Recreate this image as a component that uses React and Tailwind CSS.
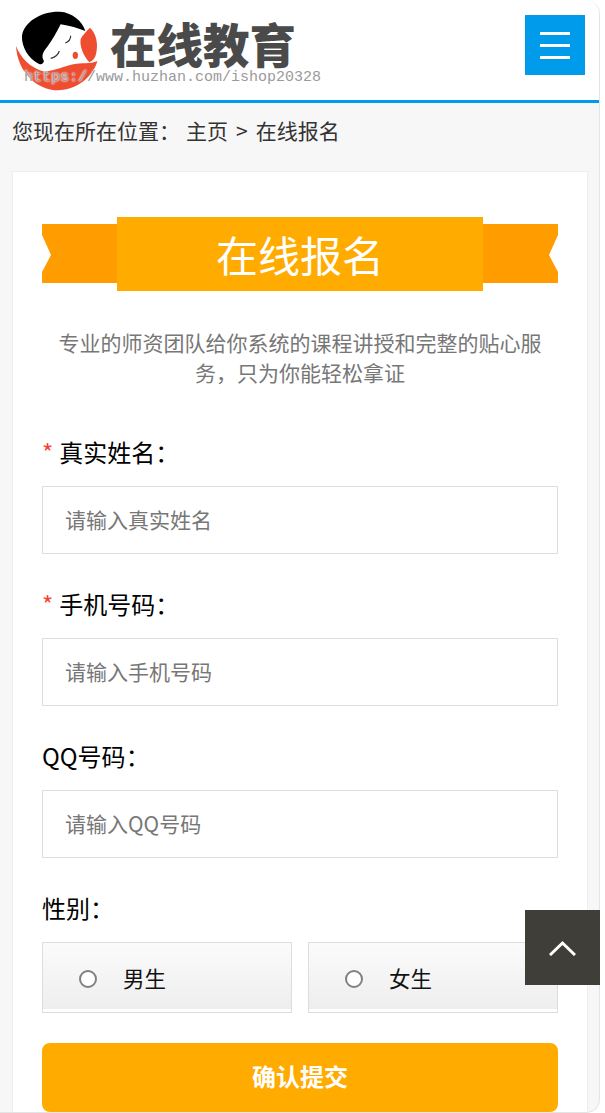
import React from "react";

const FONT = "font-['Noto_Sans_CJK_SC','Noto_Sans',sans-serif]";

const Logo = () => (
  <svg width="100" height="90" viewBox="0 0 300 270" className="shrink-0">
    {/* red bowl */}
    <path d="M18 122 C30 155 60 190 105 200 C135 196 165 184 190 178 C215 172 240 178 262 168 C250 215 200 255 145 256 C80 256 22 200 18 122 Z" fill="#ee4d30" />
    {/* cheek crescent */}
    <path d="M240 68 C258 85 266 115 258 148 C255 160 248 168 238 172 C222 155 208 125 212 102 C218 90 230 78 240 68 Z" fill="#ee4d30" />
    {/* hair */}
    <path d="M150 20 C185 22 218 48 226 78 C205 70 178 62 152 58 C140 80 128 105 112 125 C100 140 92 152 102 168 C100 176 94 180 86 176 C55 160 34 125 36 92 C42 50 95 18 150 20 Z" fill="#000" />
    {/* eyes and nose */}
    <path d="M182 92 C182 102 176 110 166 114" stroke="#333" strokeWidth="3.5" fill="none" />
    <path d="M148 138 C144 150 134 158 122 160" stroke="#333" strokeWidth="3.5" fill="none" />
    <ellipse cx="196" cy="151" rx="8" ry="11" fill="#ee4d30" />
  </svg>
);

const Label = ({ required, children }) => (
  <div className="h-[34px] text-[24px] leading-[32px] text-black">
    {required && <span className="mr-[6px] text-[#f44336]">*</span>}
    {children}：
  </div>
);

const Field = ({ required, label, placeholder }) => (
  <div className="mb-[34px]">
    <Label required={required}>{label}</Label>
    <input
      type="text"
      placeholder={placeholder}
      className="mt-[16px] block h-[68px] w-full border border-[#ddd] bg-white px-[22px] pb-[2px] text-[21px] outline-none placeholder:text-[#777]"
    />
  </div>
);

const Gender = ({ label }) => (
  <div className="flex h-[71px] w-[250px] items-start border border-[#ddd] bg-white">
    <div className="flex h-[66px] w-full items-center bg-gradient-to-b from-[#fbfbfb] to-[#eeeeee] pl-[36px] pt-[5px]">
      <span className="h-[18px] w-[18px] rounded-full border-2 border-[#808080] bg-white" />
      <span className="ml-[26px] text-[21.5px] text-[#111]">{label}</span>
    </div>
  </div>
);

export default function App() {
  return (
    <div className={`${FONT} relative h-[1113px] w-[605px] overflow-hidden bg-white`}>
      <div className="h-[1113px] w-[600px] overflow-hidden rounded-tl-[10px] rounded-r-[14px] border-b border-r border-[#e4e4e4] bg-[#f7f7f7]">
        {/* header */}
        <header className="relative flex h-[103px] items-start justify-between border-b-[3px] border-[#009bea] bg-white pl-[10px] pr-[14px]">
          <div className="flex items-start pt-[5px]">
            <Logo />
            <span className="text-[46.5px] font-black leading-[76px] text-[#4a4a4a]">
              在线教育
            </span>
          </div>
          {/* watermark baked into the logo */}
          <span className="absolute left-[24px] top-[67px] font-['Liberation_Mono',monospace] text-[15px] leading-[22px] text-[#9a9a9a] [text-shadow:0_0_2px_#fff,0_0_2px_#fff]">
            https://www.huzhan.com/ishop20328
          </span>
          <button className="mt-[15px] flex h-[60px] w-[60px] flex-col items-center justify-center gap-[9px] bg-[#009bea]">
            <i className="h-[3px] w-[30px] bg-white" />
            <i className="h-[3px] w-[30px] bg-white" />
            <i className="h-[3px] w-[30px] bg-white" />
          </button>
        </header>

        {/* breadcrumb */}
        <div className="flex h-[68px] items-start pl-[12px] pt-[12px] text-[21px] leading-[30px] text-[#333]">
          <span className="w-[174px]">您现在所在位置：</span>
          <span>主页</span>
          <span className="mx-[8px]">&gt;</span>
          <span>在线报名</span>
        </div>

        {/* form card */}
        <main className="ml-[12px] h-[1000px] w-[576px] border border-[#eee] bg-white px-[29px] pt-[45px]">
          <div className="relative flex h-[74px] justify-center">
            <svg width="516" height="59" viewBox="0 0 516 59" className="absolute left-0 top-[7px]">
              <polygon points="0,0 75,0 75,59 0,59 0,48 9,31 0,11" fill="#ff9c00" />
              <polygon points="516,0 441,0 441,59 516,59 516,48 507,31 516,11" fill="#ff9c00" />
            </svg>
            <h1 className="relative flex h-[74px] w-[366px] items-center justify-center bg-[#ffab00] pb-[2px] text-[42px] font-normal text-white">
              在线报名
            </h1>
          </div>

          <p className="mx-auto mt-[36px] mb-[49px] w-[490px] text-center text-[21px] leading-[30px] text-[#777]">
            专业的师资团队给你系统的课程讲授和完整的贴心服务，只为你能轻松拿证
          </p>

          <Field required label="真实姓名" placeholder="请输入真实姓名" />
          <Field required label="手机号码" placeholder="请输入手机号码" />
          <Field label="QQ号码" placeholder="请输入QQ号码" />

          <Label>性别</Label>
          <div className="mt-[16px] flex justify-between">
            <Gender label="男生" />
            <Gender label="女生" />
          </div>

          <button className="mt-[30px] flex h-[69px] w-full items-center justify-center rounded-[8px] bg-[#ffab00] pb-[3px] text-[24px] font-bold text-white">
            确认提交
          </button>
        </main>
      </div>

      {/* back to top */}
      <button className="absolute left-[525px] top-[910px] flex h-[75px] w-[75px] items-center justify-center bg-[#403e39]">
        <svg width="27" height="16" viewBox="0 0 27 16">
          <path d="M1 15 L13.5 3 L26 15" fill="none" stroke="#fff" strokeWidth="3" />
        </svg>
      </button>
    </div>
  );
}
